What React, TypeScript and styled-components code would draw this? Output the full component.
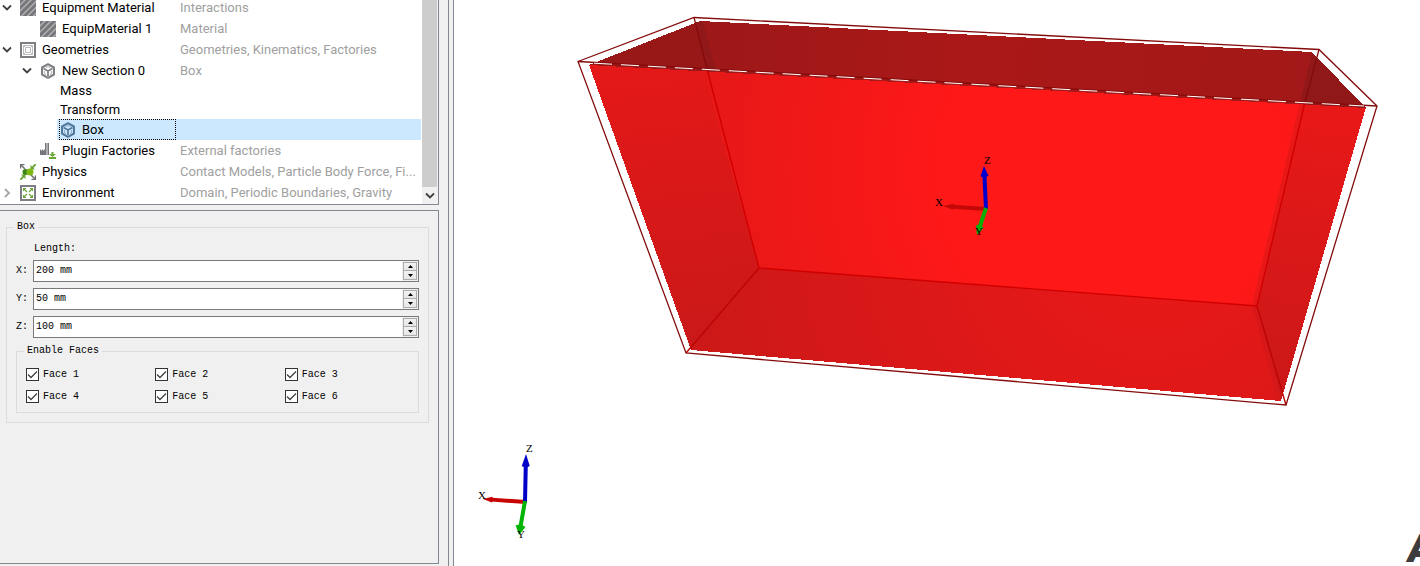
import React, { useState } from "react";
import styled, { createGlobalStyle, css } from "styled-components";

const GlobalStyle = createGlobalStyle`
  *, *::before, *::after { box-sizing: border-box; }
  body { margin: 0; background: #f0f0f0; color: #000; }
  button, input { font: inherit; color: inherit; margin: 0; padding: 0; }
  ul { list-style: none; margin: 0; padding: 0; }
`;

const Workspace = styled.div`
  display: grid;
  grid-template-columns: 439px 15px minmax(0, 1fr);
  height: 100vh;
  overflow: hidden;
`;

const Sidebar = styled.aside`
  display: grid;
  grid-template-rows: 205px minmax(0, 1fr);
  row-gap: 5px;
  padding-bottom: 2px;
  min-height: 0;
`;

const Splitter = styled.div`
  margin-left: 9px;
  border-left: 1px solid #828790;
  border-right: 1px solid #828790;
  background: #f0f0f0;
`;

/* ---------- model tree ---------- */

const TreePanel = styled.section`
  display: flex;
  overflow: hidden;
  background: #fff;
  border-right: 1px solid #828790;
  border-bottom: 1px solid #828790;
`;

const Tree = styled.ul`
  flex: 1;
  min-width: 0;
  display: flex;
  flex-direction: column;
  justify-content: flex-end;
  padding-bottom: 1px;
  font: 13px/16px Roboto, "Noto Sans", sans-serif;
`;

const Row = styled.li<{ $short?: boolean }>`
  flex: none;
  display: grid;
  grid-template-columns: 176px minmax(0, 1fr);
  column-gap: 4px;
  align-items: center;
  height: ${(p) => (p.$short ? 19 : 21)}px;
  margin-right: 1px;
`;

const NameCell = styled.div<{ $indent: number }>`
  display: flex;
  align-items: center;
  align-self: stretch;
  padding-left: ${(p) => p.$indent}px;
  white-space: nowrap;
`;

const NameBox = styled.div<{ $selected?: boolean }>`
  display: flex;
  flex: 1;
  align-items: center;
  align-self: stretch;
  gap: 6px;
  ${(p) =>
    p.$selected &&
    css`
      padding-left: 1px;
      background: #cce8ff;
      outline: 1px dotted #000;
      outline-offset: -1px;
    `}
`;

const SelectedRow = styled(Row)`
  background: linear-gradient(to right, transparent 57px, #cce8ff 57px);
`;

const Note = styled.span`
  color: #a0a0a0;
  white-space: nowrap;
`;

const Toggle = styled.button`
  display: grid;
  place-items: center;
  flex: none;
  width: 14px;
  height: 16px;
  margin-right: 6px;
  border: 0;
  background: none;
`;

const ScrollTrack = styled.div`
  flex: none;
  display: flex;
  flex-direction: column;
  width: 16px;
  border-right: 1px solid #f0f0f0;
  background: #f0f0f0;
`;

const Thumb = styled.div`
  flex: 1;
  background: #cdcdcd;
`;

const ScrollButton = styled.button`
  display: grid;
  place-items: center;
  height: 17px;
  border: 0;
  background: #f0f0f0;
`;

const Chevron = ({ open }: { open: boolean }) => (
  <svg width="10" height="10" viewBox="0 0 10 10" fill="none" stroke={open ? "#404040" : "#a6a6a6"} strokeWidth="1.800">
    <path d={open ? "M1 2.500l4 4 4-4" : "M3 1l4 4-4 4"} />
  </svg>
);

const HatchIcon = () => (
  <svg width="16" height="16" viewBox="0 0 16 16">
    <rect width="16" height="16" fill="#77777b" />
    <path d="M-1 6L6-1M-1 12L12-1M1 16.500L16.500 1M7 16.500L16.500 7M13 16.500L16.500 13" stroke="#b0b0b3" strokeWidth="1.500" />
  </svg>
);

const FrameIcon = () => (
  <svg width="16" height="16" viewBox="0 0 16 16" fill="none">
    <rect x="1" y="1" width="14" height="14" fill="#fff" stroke="#7d7d82" strokeWidth="2" />
    <path d="M3.500 3.500h9v9h-9zM5.500 5.500h5v5h-5zM3.500 3.500l2 2M12.500 3.500l-2 2M3.500 12.500l2-2M12.500 12.500l-2-2" stroke="#b4b4b8" strokeWidth="0.900" />
  </svg>
);

const CubeIcon = ({ color }: { color: string }) => (
  <svg width="16" height="16" viewBox="0 0 16 16" fill="none" stroke={color} strokeLinejoin="round">
    <path d="M8 1.200l6 3.300v7l-6 3.300-6-3.300v-7z" strokeWidth="2" />
    <path d="M3.500 5.500L8 8l4.500-2.500M8 8v5" strokeWidth="1.700" />
    <path d="M5.500 4.600L8 3.500l2.500 1.100M4.300 8v2.400L6 11.500M11.700 8v2.400L10 11.500" strokeWidth="0.600" />
  </svg>
);

const FactoryIcon = () => (
  <svg width="16" height="16" viewBox="0 0 16 16">
    <path d="M0 12V6l2 2V6l2 2V6l1 1V0h1.600v12zM7.400 12V0H9v12z" fill="#77777b" />
    <path d="M11.500 9h2v2H16l-3.500 3L9 11h2.500zM9 14h7v2H9z" fill="#6aa536" />
  </svg>
);

const PhysicsIcon = () => (
  <svg width="16" height="16" viewBox="0 0 16 16" fill="none">
    <path d="M1 1l4 4M15 15l-4-4" stroke="#6f6f74" strokeWidth="1.500" />
    <path d="M0.500 4.500v-4h4M15.500 11.500v4h-4" stroke="#6f6f74" strokeWidth="1.500" />
    <path d="M16 0l-4 4M0 16l4-4" stroke="#6aa536" strokeWidth="1.800" />
    <path d="M10.500 1v4.500H15zM5.500 15v-4.500H1z" fill="#6aa536" />
    <circle cx="5.500" cy="8" r="3" fill="#3d8516" />
    <circle cx="10" cy="8" r="3.500" fill="#80b812" />
  </svg>
);

const EnvironmentIcon = () => (
  <svg width="16" height="16" viewBox="0 0 16 16">
    <rect x="1" y="1" width="14" height="14" fill="#fff" stroke="#7d7d82" strokeWidth="2" />
    <path d="M3 3h3.500L3 6.500zM13 3v3.500L9.500 3zM3 13V9.500L6.500 13zM13 13H9.500L13 9.500z" fill="#6aa536" />
    <path d="M4 4l3 3M12 4L9 7M4 12l3-3M12 12L9 9" stroke="#6aa536" strokeWidth="1.200" />
  </svg>
);

type Item = {
  name: string;
  note?: string;
  indent: number;
  open?: boolean;
  icon?: React.ReactNode;
  short?: boolean;
  selected?: boolean;
};

const items: Item[] = [
  { name: "Equipment Material", note: "Interactions", indent: 0, open: true, icon: <HatchIcon /> },
  { name: "EquipMaterial 1", note: "Material", indent: 40, icon: <HatchIcon /> },
  { name: "Geometries", note: "Geometries, Kinematics, Factories", indent: 0, open: true, icon: <FrameIcon /> },
  { name: "New Section 0", note: "Box", indent: 20, open: true, icon: <CubeIcon color="#7d7d82" /> },
  { name: "Mass", indent: 60, short: true },
  { name: "Transform", indent: 60, short: true },
  { name: "Box", indent: 59, icon: <CubeIcon color="#52799c" />, selected: true },
  { name: "Plugin Factories", note: "External factories", indent: 40, icon: <FactoryIcon /> },
  { name: "Physics", note: "Contact Models, Particle Body Force, Fi...", indent: 20, icon: <PhysicsIcon /> },
  { name: "Environment", note: "Domain, Periodic Boundaries, Gravity", indent: 0, open: false, icon: <EnvironmentIcon /> },
];

const TreeRow = ({ item }: { item: Item }) => {
  const Line = item.selected ? SelectedRow : Row;
  return (
    <Line $short={item.short} role="treeitem" aria-selected={!!item.selected}>
      <NameCell $indent={item.indent}>
        {item.open !== undefined && (
          <Toggle type="button" aria-label={`Toggle ${item.name}`}>
            <Chevron open={item.open} />
          </Toggle>
        )}
        <NameBox $selected={item.selected}>
          {item.icon}
          <span>{item.name}</span>
        </NameBox>
      </NameCell>
      {item.note && <Note>{item.note}</Note>}
    </Line>
  );
};

/* ---------- property editor ---------- */

const Editor = styled.section`
  border-top: 1px solid #828790;
  border-right: 1px solid #828790;
  border-bottom: 1px solid #828790;
  padding: 10px 9px 0 6px;
  font: 10px/12px "Liberation Mono", monospace;
`;

const Group = styled.fieldset<{ $inner?: boolean }>`
  min-width: 0;
  margin: ${(p) => (p.$inner ? "7px 0 0" : "0")};
  padding: ${(p) => (p.$inner ? "10px 4px 9px 9px" : "10px 9px 9px")};
  border: 1px solid #dcdcdc;
`;

const GroupTitle = styled.legend`
  padding: 0 3px;
  margin-left: -2px;
`;

const LengthCaption = styled.div`
  padding-left: 18px;
  margin-bottom: 5px;
`;

const Field = styled.div`
  display: grid;
  grid-template-columns: 17px minmax(0, 1fr);
  align-items: center;
  margin-bottom: 6px;
`;

const SpinBox = styled.div`
  display: flex;
  height: 22px;
  border: 1px solid #7a7a7a;
  background: #fff;
`;

const SpinInput = styled.input`
  flex: 1;
  min-width: 0;
  padding: 0 2px;
  border: 0;
  outline: 0;
  background: transparent;
`;

const SpinButtons = styled.div`
  display: grid;
  grid-template-rows: 1fr 1fr;
  width: 16px;
  padding: 1px;
  background: #f0f0f0;
`;

const SpinButton = styled.button`
  display: grid;
  place-items: center;
  border: 1px solid #acacac;
  background: linear-gradient(#f2f2f2, #e6e6e6);
  & + & { border-top-width: 0; }
`;

const FaceGrid = styled.div`
  display: grid;
  grid-template-columns: repeat(3, minmax(0, 1fr));
  row-gap: 8px;
`;

const FaceLabel = styled.label`
  display: flex;
  align-items: center;
  height: 14px;
`;

const FaceName = styled.span`
  padding: 2px 0 0 4px;
`;

const Check = styled.input`
  appearance: none;
  width: 13px;
  height: 13px;
  border: 1px solid #333;
  background: #fff;
  &:checked {
    background: #fff
      url("data:image/svg+xml,%3Csvg xmlns='http://www.w3.org/2000/svg' viewBox='0 0 11 11'%3E%3Cpath d='M1 5.500l3 3L10 2.500' fill='none' stroke='%23404040' stroke-width='1.300'/%3E%3C/svg%3E");
  }
`;

const Triangle = ({ down }: { down?: boolean }) => (
  <svg width="5" height="3" viewBox="0 0 5 3">
    <path d={down ? "M0 0h5L2.500 3z" : "M0 3h5L2.500 0z"} fill="#000" />
  </svg>
);

const LengthField = ({ axis, initial }: { axis: string; initial: string }) => {
  const [value, setValue] = useState(initial);
  const step = (by: number) => setValue(`${parseFloat(value) + by} mm`);
  const id = `length-${axis}`;
  return (
    <Field>
      <label htmlFor={id}>{axis}:</label>
      <SpinBox>
        <SpinInput id={id} value={value} onChange={(e) => setValue(e.target.value)} />
        <SpinButtons>
          <SpinButton type="button" aria-label={`Increase ${axis}`} onClick={() => step(1)}>
            <Triangle />
          </SpinButton>
          <SpinButton type="button" aria-label={`Decrease ${axis}`} onClick={() => step(-1)}>
            <Triangle down />
          </SpinButton>
        </SpinButtons>
      </SpinBox>
    </Field>
  );
};

/* ---------- 3D view ---------- */

const Viewport = styled.main`
  min-width: 0;
  min-height: 0;
  overflow: hidden;
  background: #fff;
`;

const Scene = styled.svg`
  display: block;
  width: 100%;
  height: 100%;
`;

const AxisName = styled.text`
  font: 11px "Liberation Serif", serif;
  fill: #000;
`;

const Brand = styled.text`
  font: italic 800 38px "Open Sans", sans-serif;
  fill: #3c3c3c;
`;

type Point = [number, number];

const Arrow = ({ from, to, color, head, back }: { from: Point; to: Point; color: string; head: number; back: number }) => {
  const dx = to[0] - from[0];
  const dy = to[1] - from[1];
  const len = Math.hypot(dx, dy);
  const [ux, uy] = [dx / len, dy / len];
  const base: Point = [to[0] - ux * back, to[1] - uy * back];
  return (
    <g>
      <line x1={from[0]} y1={from[1]} x2={base[0]} y2={base[1]} stroke={color} strokeWidth="4" />
      <polygon
        points={`${to[0]},${to[1]} ${base[0] - uy * head},${base[1] + ux * head} ${base[0] - ux * 2},${base[1] - uy * 2} ${base[0] + uy * head},${base[1] - ux * head}`}
        fill={color}
      />
    </g>
  );
};

const BoxScene = () => (
  <Scene viewBox="454 0 966 566" preserveAspectRatio="xMinYMin meet" role="img" aria-label="Box geometry">
    <defs>
      <radialGradient id="back" gradientUnits="userSpaceOnUse" cx="1110" cy="170" r="430">
        <stop offset="0" stopColor="#ff1818" />
        <stop offset="0.400" stopColor="#fe1818" />
        <stop offset="1" stopColor="#e41818" />
      </radialGradient>
      <linearGradient id="left" gradientUnits="userSpaceOnUse" x1="670" y1="70" x2="700" y2="345">
        <stop offset="0" stopColor="#e41818" />
        <stop offset="1" stopColor="#ca1818" />
      </linearGradient>
      <radialGradient id="floor" gradientUnits="userSpaceOnUse" cx="1150" cy="230" r="500">
        <stop offset="0" stopColor="#ea1818" />
        <stop offset="0.350" stopColor="#e01818" />
        <stop offset="1" stopColor="#ca1818" />
      </radialGradient>
      <linearGradient id="right" gradientUnits="userSpaceOnUse" x1="1330" y1="105" x2="1275" y2="390">
        <stop offset="0" stopColor="#e91818" />
        <stop offset="1" stopColor="#cb1818" />
      </linearGradient>
      <linearGradient id="top" gradientUnits="userSpaceOnUse" x1="600" y1="60" x2="1340" y2="80">
        <stop offset="0" stopColor="#981818" />
        <stop offset="0.500" stopColor="#ab1818" />
        <stop offset="1" stopColor="#a21818" />
      </linearGradient>
    </defs>

    <g shapeRendering="crispEdges">
      <polygon points="589,65 700,21 759,268 691,350" fill="url(#left)" />
      <polygon points="700,60 1312,80 1257,306 759,268" fill="url(#back)" />
      <polygon points="759,268 1257,306 1281,401 691,350" fill="url(#floor)" />
      <polygon points="1305,80 1366,107 1281,401 1257,306" fill="url(#right)" />
      <polygon points="1300,102 1306,102 1257,306 1252,305" fill="#e81818" />
      <polygon points="1252,305 1257,306 1281,401 1277,400" fill="#d81818" />
      <polygon points="589,65 700,21 1312,52 1366,108" fill="url(#top)" />
      <polygon points="589,65 700,21 712,70" fill="#981818" />
      <polygon points="1312,52 1366,108 1300,104" fill="#901818" />
      <polygon points="697,22 703,21 716,71 707,70" fill="#901818" />
    </g>

    <g fill="none" strokeWidth="1.400" stroke="#d00000">
      <path d="M707 69L759 268L1257 306L1305 102" />
      <path d="M686 353L759 268M1286 405L1257 306" stroke="#bd0505" />
    </g>
    <g fill="none" strokeWidth="1.300" stroke="#840b0b">
      <path d="M578 61.500L694 17.500L1319 49.500L1377 106L1286 405L686 353z" />
      <path d="M694 17.500L707 69M1319 49.500L1305 102" />
      <path d="M578 61.500L1377 106" />
    </g>
    <path d="M594 63.200L1364 106" stroke="#fff" strokeWidth="1" strokeDasharray="18 9" />

    <Arrow from={[986, 209]} to={[943, 206]} color="#c40808" head={3} back={10} />
    <Arrow from={[986, 209]} to={[984, 166]} color="#0000cc" head={4} back={10} />
    <Arrow from={[986, 208]} to={[977, 235]} color="#08b008" head={4} back={9} />
    <AxisName x="935" y="206">X</AxisName>
    <AxisName x="984" y="164">Z</AxisName>
    <AxisName x="975" y="235">Y</AxisName>

    <Arrow from={[526, 502]} to={[483, 499]} color="#c80404" head={3} back={9} />
    <Arrow from={[525, 503]} to={[526, 454]} color="#0000c8" head={4} back={12} />
    <Arrow from={[525, 501]} to={[519, 535]} color="#04b404" head={5} back={9} />
    <AxisName x="478" y="499">X</AxisName>
    <AxisName x="526" y="452">Z</AxisName>
    <AxisName x="517" y="538">Y</AxisName>

    <Brand x="1408" y="562">A</Brand>
  </Scene>
);

export default function App() {
  return (
    <>
      <GlobalStyle />
      <Workspace>
        <Sidebar>
          <TreePanel>
            <Tree role="tree" aria-label="Model">
              {items.map((item) => (
                <TreeRow key={item.name} item={item} />
              ))}
            </Tree>
            <ScrollTrack>
              <Thumb />
              <ScrollButton type="button" aria-label="Scroll down">
                <Chevron open />
              </ScrollButton>
            </ScrollTrack>
          </TreePanel>
          <Editor>
            <Group>
              <GroupTitle>Box</GroupTitle>
              <LengthCaption>Length:</LengthCaption>
              <LengthField axis="X" initial="200 mm" />
              <LengthField axis="Y" initial="50 mm" />
              <LengthField axis="Z" initial="100 mm" />
              <Group $inner>
                <GroupTitle>Enable Faces</GroupTitle>
                <FaceGrid>
                  {[1, 2, 3, 4, 5, 6].map((n) => (
                    <FaceLabel key={n}>
                      <Check type="checkbox" defaultChecked />
                      <FaceName>Face {n}</FaceName>
                    </FaceLabel>
                  ))}
                </FaceGrid>
              </Group>
            </Group>
          </Editor>
        </Sidebar>
        <Splitter />
        <Viewport>
          <BoxScene />
        </Viewport>
      </Workspace>
    </>
  );
}
